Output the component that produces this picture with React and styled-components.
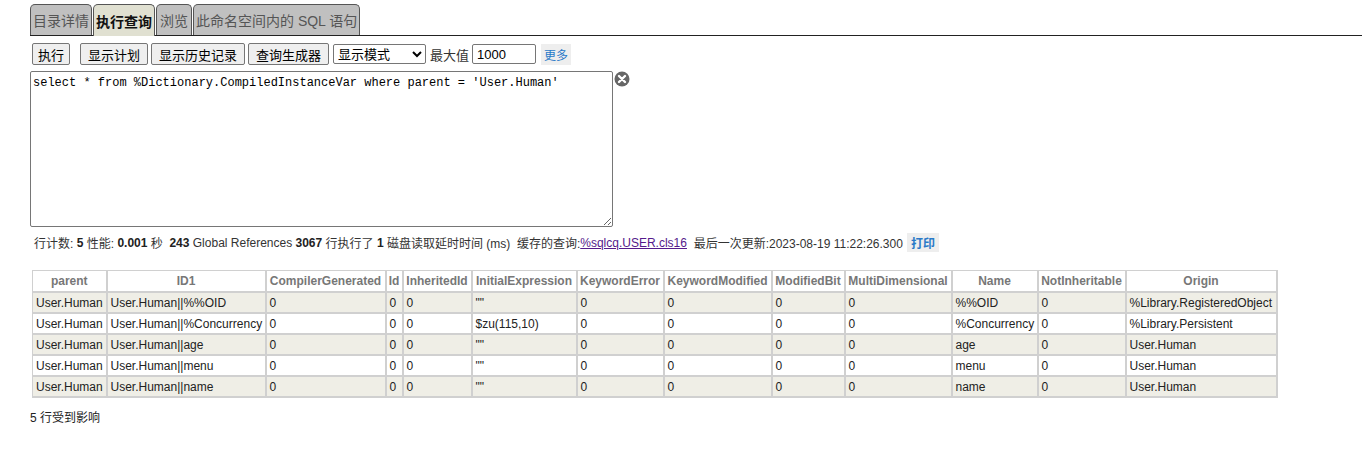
import React from 'react';
import styled, { createGlobalStyle } from 'styled-components';

const GlobalStyle = createGlobalStyle`
  body {
    margin: 0;
    background: #fff;
    font-family: "Liberation Sans", Arial, "Noto Sans CJK SC", sans-serif;
    color: #222;
  }
`;

const Page = styled.div`
  padding: 4px 0 0 30px;
`;

const TabBar = styled.div`
  display: flex;
  align-items: flex-end;
  border-bottom: 1px solid #222;
  height: 31px;
`;

const Tab = styled.div`
  box-sizing: border-box;
  padding: 0 ${(p) => p.pad || 2}px;
  margin-right: 1px;
  display: flex;
  align-items: center;
  font-size: 14px;
  border: 1px solid #555;
  border-bottom: none;
  border-radius: 5px 5px 0 0;
  background: ${(p) => (p.active ? '#e0e0d1' : '#c0c0c0')};
  color: ${(p) => (p.active ? '#111' : '#555')};
  font-weight: ${(p) => (p.active ? 'bold' : 'normal')};
  height: ${(p) => (p.active ? '32px' : '31px')};
  margin-bottom: ${(p) => (p.active ? '-1px' : '0')};
`;

const Toolbar = styled.div`
  display: flex;
  align-items: center;
  gap: 3px;
  margin-top: 7px;
  height: 22px;
  padding-left: 2px;
`;

const Button = styled.button`
  font-family: inherit;
  font-size: 13px;
  height: 22px;
  padding: 0 ${(p) => p.pad || 7}px;
  background: #efefef;
  border: 1px solid #767676;
  border-radius: 2px;
  color: #000;
  margin-right: ${(p) => p.gap || 0}px;
`;

const Select = styled.select`
  font-family: inherit;
  font-size: 13px;
  height: 20px;
  width: 93px;
  border: 1px solid #767676;
  border-radius: 2px;
  background: #fff;
  color: #000;
  margin-left: 1px;
`;

const Label = styled.span`
  font-size: 13px;
  color: #333;
  margin-left: 1px;
`;

const NumInput = styled.input`
  font-family: inherit;
  font-size: 13px;
  width: 64px;
  height: 20px;
  box-sizing: border-box;
  border: 1px solid #767676;
  border-radius: 2px;
  padding: 1px 4px;
`;

const MoreLink = styled.span`
  font-size: 12px;
  color: #2a7ac8;
  background: #eee;
  padding: 2px 3px;
  margin-left: 2px;
`;

const EditorRow = styled.div`
  display: flex;
  align-items: flex-start;
  margin-top: 6px;
`;

const QueryBox = styled.textarea`
  width: 583px;
  height: 156px;
  box-sizing: border-box;
  font-family: "Liberation Mono", "Courier New", monospace;
  font-size: 12px;
  padding: 4px 2px;
  border: 1px solid #767676;
  border-radius: 2px;
  resize: both;
  color: #000;
  display: block;
`;

const ClearIcon = styled.svg`
  width: 16px;
  height: 16px;
  margin: 0 0 0 1px;
`;

const Stats = styled.div`
  font-size: 12px;
  color: #333;
  margin: 6px 0 0 4px;
  display: flex;
  align-items: center;
  white-space: pre;
  b { color: #222; }
`;

const CacheLink = styled.a`
  color: #551a8b;
  text-decoration: underline;
`;

const PrintLink = styled.span`
  color: #2a7ac8;
  background: #eee;
  padding: 1px 4px;
  margin-left: 4px;
  font-weight: bold;
`;

const Table = styled.table`
  border-collapse: collapse;
  table-layout: fixed;
  width: 1244px;
  margin: 18px 0 0 2px;
  font-size: 12px;
  border: 1px solid #d0d0d0;
`;

const Th = styled.th`
  font-weight: bold;
  color: #777;
  height: 20px;
  padding: 0 2px;
  border: 1px solid #d0d0d0;
  border-width: 0 2px 2px 0;
  background: #fff;
  white-space: nowrap;
  overflow: hidden;
`;

const Row = styled.tr`
  background: ${(p) => (p.odd ? '#efeee6' : '#fff')};
`;

const Td = styled.td`
  height: 19px;
  padding: 0 3px;
  color: #222;
  border: 1px solid #d0d0d0;
  border-width: 0 2px 2px 0;
  white-space: nowrap;
  overflow: hidden;
`;

const Footer = styled.div`
  font-size: 12px;
  color: #222;
  margin-top: 10px;
`;

const columns = [
  ['parent', 74], ['ID1', 159], ['CompilerGenerated', 120], ['Id', 17],
  ['InheritedId', 69], ['InitialExpression', 105], ['KeywordError', 87],
  ['KeywordModified', 108], ['ModifiedBit', 73], ['MultiDimensional', 107],
  ['Name', 86], ['NotInheritable', 88], ['Origin', 151],
];

const rows = [
  ['%%OID', '""', '%Library.RegisteredObject'],
  ['%Concurrency', '$zu(115,10)', '%Library.Persistent'],
  ['age', '""', 'User.Human'],
  ['menu', '""', 'User.Human'],
  ['name', '""', 'User.Human'],
];

export default function App() {
  return (
    <>
      <GlobalStyle />
      <Page>
        <TabBar>
          <Tab>目录详情</Tab>
          <Tab active>执行查询</Tab>
          <Tab pad={3}>浏览</Tab>
          <Tab>此命名空间内的 SQL 语句</Tab>
        </TabBar>
        <Toolbar>
          <Button gap={7} pad={5}>执行</Button>
          <Button>显示计划</Button>
          <Button>显示历史记录</Button>
          <Button>查询生成器</Button>
          <Select defaultValue="显示模式">
            <option>显示模式</option>
          </Select>
          <Label>最大值</Label>
          <NumInput defaultValue="1000" />
          <MoreLink>更多</MoreLink>
        </Toolbar>
        <EditorRow>
          <QueryBox defaultValue="select * from %Dictionary.CompiledInstanceVar where parent = 'User.Human'" spellCheck={false} />
          <ClearIcon viewBox="0 0 16 16">
            <circle cx="8" cy="8" r="7.5" fill="#666" />
            <path d="M5 5 L11 11 M11 5 L5 11" stroke="#fff" strokeWidth="2.4" strokeLinecap="round" />
          </ClearIcon>
        </EditorRow>
        <Stats>
          行计数: <b>5</b> 性能: <b>0.001</b> 秒  <b>243</b> Global References <b>3067</b> 行执行了 <b>1</b> 磁盘读取延时时间 (ms)  缓存的查询:<CacheLink>%sqlcq.USER.cls16</CacheLink>  最后一次更新:2023-08-19 11:22:26.300<PrintLink>打印</PrintLink>
        </Stats>
        <Table>
          <colgroup>
            {columns.map(([name, w]) => (
              <col key={name} style={{ width: w }} />
            ))}
          </colgroup>
          <thead>
            <tr>
              {columns.map(([name]) => (
                <Th key={name}>{name}</Th>
              ))}
            </tr>
          </thead>
          <tbody>
            {rows.map(([name, init, origin], i) => (
              <Row key={name} odd={i % 2 === 0}>
                <Td>User.Human</Td>
                <Td>User.Human||{name}</Td>
                <Td>0</Td>
                <Td>0</Td>
                <Td>0</Td>
                <Td>{init}</Td>
                <Td>0</Td>
                <Td>0</Td>
                <Td>0</Td>
                <Td>0</Td>
                <Td>{name}</Td>
                <Td>0</Td>
                <Td>{origin}</Td>
              </Row>
            ))}
          </tbody>
        </Table>
        <Footer>5 行受到影响</Footer>
      </Page>
    </>
  );
}
